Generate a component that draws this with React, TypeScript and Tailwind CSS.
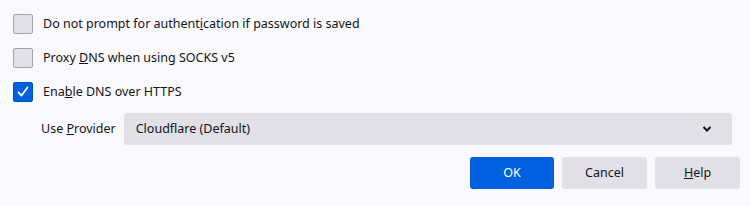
import { useState } from 'react'

function Checkbox({ checked, onChange, children }: { checked: boolean; onChange: () => void; children: React.ReactNode }) {
  return (
    <label className="flex items-center h-[34px] cursor-default" onClick={onChange}>
      <span
        className={
          checked
            ? 'w-5 h-5 rounded-[2px] border border-[#0250bb] bg-[#0061e0] flex items-center justify-center'
            : 'w-5 h-5 rounded-[2px] border border-[#a4a4a8] bg-[#e0e0e6]'
        }
      >
        {checked && (
          <svg width="14" height="14" viewBox="0 0 14 14" fill="none">
            <path d="M2.5 7.5 L5.5 10.5 L11.5 2.5" stroke="white" strokeWidth="1.8" strokeLinecap="round" strokeLinejoin="round" />
          </svg>
        )}
      </span>
      <span className="ml-[10px]">{children}</span>
    </label>
  )
}

export default function App() {
  const [noPrompt, setNoPrompt] = useState(false)
  const [proxyDns, setProxyDns] = useState(false)
  const [doh, setDoh] = useState(true)

  return (
    <div
      className="w-[750px] h-[206px] bg-[#f9f9fb] text-[#15141a] text-[12.5px] pl-[13px] pr-[10px] pt-[7px]"
      style={{ fontFamily: '"Noto Sans", "Open Sans", sans-serif' }}
    >
      <Checkbox checked={noPrompt} onChange={() => setNoPrompt(!noPrompt)}>
        Do not prompt for authent<u>i</u>cation if password is saved
      </Checkbox>
      <Checkbox checked={proxyDns} onChange={() => setProxyDns(!proxyDns)}>
        Proxy <u>D</u>NS when using SOCKS v5
      </Checkbox>
      <Checkbox checked={doh} onChange={() => setDoh(!doh)}>
        Ena<u>b</u>le DNS over HTTPS
      </Checkbox>

      <div className="flex items-center mt-[4px] pl-[28px] pr-[8px]">
        <span className="mr-[8px]">
          Use <u>P</u>rovider
        </span>
        <div className="flex-1 h-[32px] rounded-[3px] bg-[#e0e0e6] flex items-center justify-between pl-[12px] pr-[20px]">
          <span>Cloudflare (Default)</span>
          <svg width="10" height="6" viewBox="0 0 10 6" fill="none">
            <path d="M1.5 1 L5 4.5 L8.5 1" stroke="#15141a" strokeWidth="2" />
          </svg>
        </div>
      </div>

      <div className="flex justify-end gap-2 mt-[12px]">
        <button className="w-[84px] h-[32px] rounded-[3px] bg-[#0061e0] text-white">OK</button>
        <button className="w-[85px] h-[32px] rounded-[3px] bg-[#e0e0e6]">Cancel</button>
        <button className="w-[85px] h-[32px] rounded-[3px] bg-[#e0e0e6]">
          <u>H</u>elp
        </button>
      </div>
    </div>
  )
}
